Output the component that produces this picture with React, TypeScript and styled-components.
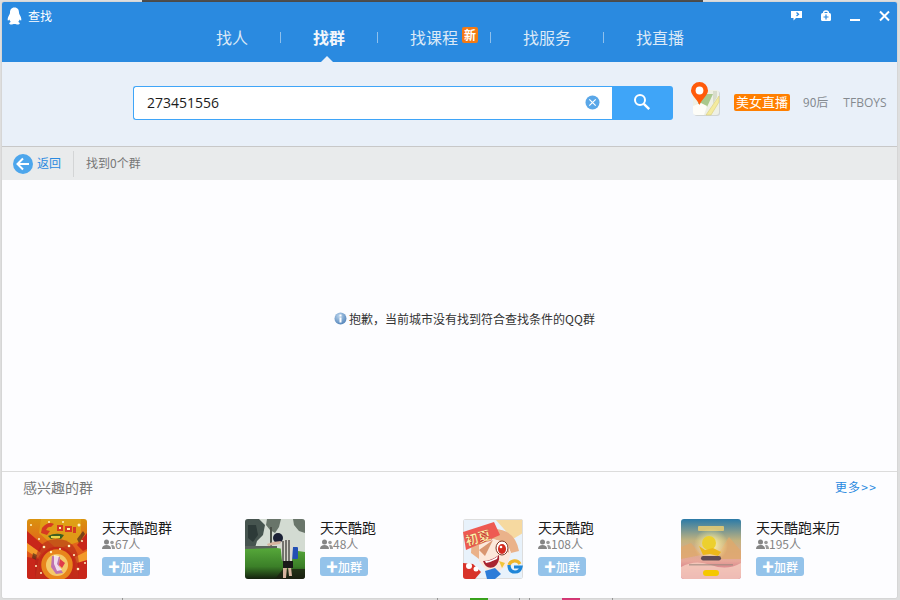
import React from "react";
import styled, { createGlobalStyle } from "styled-components";

const Global = createGlobalStyle`
  html, body { margin: 0; padding: 0; width: 900px; height: 600px; overflow: hidden; background: #d6d6d6; }
  * { box-sizing: border-box; }
  body { font-family: "Noto Sans CJK SC", "Liberation Sans", sans-serif; }
`;

const Desktop = styled.div`
  position: relative;
  width: 900px;
  height: 600px;
  padding: 2px 3px 2px 2px;
  background: #dedede;
  overflow: hidden;
`;
const TopStrip = styled.div`
  position: absolute;
  left: 142px;
  top: 0;
  width: 561px;
  height: 2px;
  background: #4d4d4d;
`;
const BottomMark = styled.div<{ $x: number; $w: number; $c: string }>`
  position: absolute;
  left: ${(p) => p.$x}px;
  bottom: 0;
  width: ${(p) => p.$w}px;
  height: 2px;
  background: ${(p) => p.$c};
`;
const Win = styled.div`
  position: relative;
  width: 895px;
  height: 596px;
  display: flex;
  flex-direction: column;
  background: #fdfdff;
  border-radius: 2px;
  box-shadow: 0 0 1px rgba(0, 0, 0, 0.35);
  overflow: hidden;
`;
const Header = styled.header`
  height: 60px;
  flex: none;
  background: #2a8ae0;
  position: relative;
`;
const TitleBar = styled.div`
  height: 25px;
  display: flex;
  align-items: center;
  padding: 3px 7px 0 5px;
`;
const TitleText = styled.span`
  margin-left: 6px;
  font-size: 12px;
  color: #fff;
  line-height: 16px;
`;
const WinButtons = styled.div`
  margin-left: auto;
  display: flex;
  align-items: center;
  gap: 19px;
  height: 16px;
`;
const Nav = styled.nav`
  display: flex;
  align-items: center;
  gap: 32px;
  padding-left: 214px;
  height: 24px;
  margin-top: -2px;
`;
const Tab = styled.a<{ $active?: boolean }>`
  position: relative;
  font-size: 16px;
  line-height: 24px;
  color: ${(p) => (p.$active ? "#f2f6fb" : "#dbe9f7")};
  font-weight: ${(p) => (p.$active ? 700 : 400)};
  white-space: nowrap;
`;
const NavSep = styled.i`
  width: 1px;
  height: 11px;
  background: #8fc0ec;
`;
const NewBadge = styled.span`
  position: absolute;
  left: 52px;
  top: 2px;
  width: 16px;
  height: 16px;
  border-radius: 2px;
  background: #f47a14;
  color: #fff;
  font-size: 12px;
  font-weight: 700;
  line-height: 15px;
  text-align: center;
`;
const Caret = styled.i`
  position: absolute;
  left: 319px;
  bottom: 0;
  width: 0;
  height: 0;
  border-left: 6px solid transparent;
  border-right: 6px solid transparent;
  border-bottom: 6px solid #e9f0f9;
`;
const SearchBar = styled.section`
  height: 84px;
  flex: none;
  background: #e9f0f9;
  display: flex;
  align-items: flex-start;
  padding: 24px 10px 0 131px;
`;
const SearchBox = styled.div`
  width: 479px;
  height: 34px;
  background: #fff;
  border: 1px solid #3fa5f8;
  border-right: 0;
  border-radius: 3px 0 0 3px;
  display: flex;
  align-items: center;
  padding: 0 12px 0 13px;
  justify-content: space-between;
`;
const SearchValue = styled.span`
  font-family: "Open Sans", sans-serif;
  font-size: 14px;
  color: #1c1c1c;
  margin-bottom: 2px;
`;
const SearchBtn = styled.button`
  width: 61px;
  height: 34px;
  padding: 0 2px 2px 0;
  border: 0;
  border-radius: 0 3px 3px 0;
  background: #3fa5f8;
  display: flex;
  align-items: center;
  justify-content: center;
`;
const MapWrap = styled.div`
  margin: -4px 0 0 17px;
  width: 31px;
  height: 38px;
  flex: none;
`;
const HotTag = styled.span`
  margin: 8px 0 0 13px;
  width: 56px;
  height: 17px;
  background: #ff7f00;
  border-radius: 2px;
  color: #fff;
  font-size: 13px;
  line-height: 15px;
  text-align: center;
  flex: none;
`;
const HotLink = styled.span`
  margin: 7px 0 0 13px;
  font-size: 12px;
  line-height: 17px;
  color: #858a90;
  flex: none;
`;
const HotLatin = styled(HotLink)`
  font-family: "Open Sans", sans-serif;
  margin-left: 15px;
  margin-top: 8px;
  font-size: 12px;
`;
const Toolbar = styled.div`
  height: 34px;
  flex: none;
  background: #e9ebec;
  border-top: 1px solid #c8c8c8;
  display: flex;
  align-items: center;
  padding-left: 11px;
`;
const BackText = styled.a`
  margin: 0 0 2px 4px;
  font-size: 12px;
  color: #2a8ae0;
`;
const ToolSep = styled.i`
  width: 1px;
  height: 26px;
  margin: 0 12px 0 12px;
  background: #d3d5d6;
`;
const ResultCount = styled.span`
  font-size: 12px;
  color: #777;
  margin-bottom: 2px;
`;
const Empty = styled.main`
  flex: 1;
  display: flex;
  align-items: center;
  justify-content: center;
  padding: 0 0 15px 30px;
`;
const EmptyText = styled.span`
  margin-left: 2px;
  font-size: 12px;
  color: #333;
  white-space: nowrap;
`;
const Footer = styled.footer`
  height: 127px;
  flex: none;
  border-top: 1px solid #dcdcdc;
  background: #fdfdff;
  padding: 0 21px;
`;
const FooterHead = styled.div`
  height: 30px;
  display: flex;
  align-items: center;
  justify-content: space-between;
`;
const FooterTitle = styled.h3`
  margin: 0;
  font-size: 14px;
  font-weight: 400;
  color: #777;
  line-height: 18px;
`;
const More = styled.a`
  font-size: 12px;
  color: #2a8ae0;
  margin: -2px -1px 0 0;
  letter-spacing: 1.2px;
`;
const Groups = styled.div`
  margin: 17px 0 0 4px;
  display: grid;
  grid-template-columns: repeat(4, 218px);
`;
const Card = styled.div`
  display: flex;
  gap: 15px;
`;
const Thumb = styled.div`
  width: 60px;
  height: 60px;
  border-radius: 3px;
  overflow: hidden;
  flex: none;
`;
const Info = styled.div`
  display: flex;
  flex-direction: column;
  align-items: flex-start;
`;
const Name = styled.div`
  font-size: 14px;
  line-height: 16px;
  color: #1a1a1a;
`;
const Members = styled.div`
  display: flex;
  align-items: center;
  font-size: 12px;
  line-height: 16px;
  color: #858585;
  height: 18px;
`;
const JoinBtn = styled.button`
  margin-top: 4px;
  width: 48px;
  height: 19px;
  padding: 0;
  border: 0;
  border-radius: 3px;
  background: #94c3ea;
  color: #fff;
  font-family: inherit;
  font-size: 12px;
  line-height: 19px;
  font-weight: 500;
  white-space: nowrap;
`;

const Penguin = () => (
  <svg width="15" height="18" viewBox="0 0 15 18">
    <path fill="#fff" d="M7.5 0.5C4.2 0.5 3 3 3 5.6c0 1-.3 1.500-.8 2.500C1.200 9.900.5 11.500.7 13c.2 1 .9.700 1.600-.4.300 1 .8 1.800 1.500 2.500-1.100.4-1.700 1-1.500 1.600.3.800 2.300.8 3.500.5.500-.1 1-.2 1.700-.2s1.200.1 1.700.2c1.200.3 3.200.3 3.500-.5.200-.6-.4-1.200-1.500-1.600.7-.7 1.200-1.500 1.500-2.500.7 1.100 1.400 1.400 1.600.4.200-1.500-.5-3.100-1.500-4.900-.5-1-.8-1.500-.8-2.500C12 3 10.800.5 7.500.5z" />
  </svg>
);
const FeedbackIcon = () => (
  <svg width="11" height="12" viewBox="0 0 11 12">
    <path fill="#fff" d="M0 1h11v7H5l-2.500 2.500V8H0z" />
    <path fill="none" stroke="#2a8ae0" strokeWidth="1.300" d="M5.500 2.500l2 1.700-2 1.700" />
  </svg>
);
const LockPlusIcon = () => (
  <svg width="10" height="12" viewBox="0 0 10 12">
    <path fill="none" stroke="#fff" strokeWidth="1.300" d="M2.500 5V3.500a2.500 2.500 0 0 1 5 0V5" />
    <rect x="0" y="3" width="10" height="8" rx="1.500" fill="#fff" />
    <path stroke="#2a8ae0" strokeWidth="1.200" d="M2.500 7h5M5 4.500v5" />
  </svg>
);
const MinIcon = () => (
  <svg width="10" height="12" viewBox="0 0 10 12">
    <rect x="0" y="9" width="10" height="2" fill="#fff" />
  </svg>
);
const CloseIcon = () => (
  <svg width="11" height="12" viewBox="0 0 11 12">
    <path stroke="#fff" strokeWidth="2" d="M1 1.500l9 9M10 1.500l-9 9" />
  </svg>
);
const ClearIcon = () => (
  <svg width="15" height="15" viewBox="0 0 15 15" style={{ marginBottom: 2 }}>
    <circle cx="7.500" cy="7.500" r="7" fill="#5aa7e8" />
    <path stroke="#fff" strokeWidth="1.200" d="M4.300 4.300l6.400 6.400M10.700 4.300l-6.400 6.400" />
  </svg>
);
const SearchIcon = () => (
  <svg width="18" height="18" viewBox="0 0 18 18">
    <circle cx="7" cy="7" r="5" fill="none" stroke="#fff" strokeWidth="2" />
    <path stroke="#fff" strokeWidth="2.400" d="M10.800 10.800l5.400 5.400" />
  </svg>
);
const MapIcon = () => (
  <svg width="31" height="38" viewBox="0 0 31 38">
    <rect x="4" y="9" width="26" height="25" rx="3" fill="#b9b9b0" opacity="0.5" />
    <rect x="3" y="8" width="26" height="25" rx="3" fill="#eef0e6" />
    <path fill="#a9c88c" d="M8 12h15l-6 13H8z" />
    <path fill="#d8dccb" d="M23 9h4v6l-4 7z" />
    <path fill="#f4eb9e" stroke="#d9cd7c" strokeWidth=".6" d="M29 14v6l-8 13h-5z" />
    <path fill="#fdfdf8" d="M3 24l8-3 6 3-3 9H6a3 3 0 0 1-3-3z" />
    <path fill="#ff5a0a" d="M9.500 0a8.500 8.500 0 0 0-8.500 8.500c0 4.500 6 8.500 8.500 14.500 2.500-6 8.500-10 8.500-14.500A8.500 8.500 0 0 0 9.500 0z" />
    <circle cx="9.500" cy="8.500" r="3.900" fill="#fff" />
  </svg>
);
const BackIcon = () => (
  <svg width="20" height="20" viewBox="0 0 20 20">
    <circle cx="10" cy="10" r="10" fill="#4da6ec" />
    <path fill="none" stroke="#fff" strokeWidth="2" d="M16 10H5M10 4.500L4.500 10l5.500 5.500" />
  </svg>
);
const InfoIcon = () => (
  <svg width="13" height="13" viewBox="0 0 13 13">
    <defs>
      <radialGradient id="ig" cx="40%" cy="30%" r="75%">
        <stop offset="0" stopColor="#bcd6ee" />
        <stop offset="1" stopColor="#4f81b8" />
      </radialGradient>
    </defs>
    <circle cx="6.500" cy="6.500" r="6" fill="url(#ig)" />
    <rect x="5.500" y="2.500" width="2" height="2" fill="#fff" />
    <rect x="5.500" y="5.500" width="2" height="5" fill="#fff" />
  </svg>
);
const PeopleIcon = () => (
  <svg width="13" height="10" viewBox="0 0 13 10">
    <circle cx="4.500" cy="3" r="2.500" fill="#858585" />
    <path fill="#858585" d="M0 10c0-3 2-4 4.500-4S9 7 9 10z" />
    <circle cx="10" cy="3.500" r="1.800" fill="#9a9a9a" />
    <path fill="#9a9a9a" d="M10 6c2 0 3 1.500 3 4h-3c0-1.500-.3-2.800-1-3.600z" />
  </svg>
);

const ThumbRun = () => (
  <svg width="60" height="60" viewBox="0 0 60 60">
    <defs>
      <linearGradient id="t1" x1="0" y1="0" x2="0" y2="1">
        <stop offset="0" stopColor="#d9930f" />
        <stop offset=".4" stopColor="#e2661a" />
        <stop offset="1" stopColor="#d8351c" />
      </linearGradient>
    </defs>
    <rect width="60" height="60" fill="url(#t1)" />
    <path fill="#e0a418" d="M14 0h40v22L30 30 12 14z" opacity=".8" />
    <path fill="#c8261a" d="M0 12l16 14-4 8L0 24zM60 14l-10 12 6 6 4-2zM0 38l12 2-4 20H0zM60 36l-10 4 2 20h8z" />
    <path fill="#f39a2a" d="M0 24l14 10-3 5L0 32zM60 32l-12 6 2 6 10-3z" />
    <path fill="#4f2c1a" d="M50 20l6-8 2 3-6 9zM6 34l4 2-1 5-4-2z" opacity=".7" />
    <path fill="#d63a22" d="M15 9q6-7 12-4l-3 3q-3-1-5 3l4 1-3 4-6-2zM30 6h6v6h-6zM38 7h7v6h-7zM46 8h3v6h-3z" />
    <path fill="#fff2b0" d="M32 8h2v2h-2zM40 9h3v2h-3z" />
    <path fill="#3d5f22" d="M21 17q8-4 16-1l-3 4q-6-2-10 0z" />
    <path fill="#e8d64a" d="M24 17h9v2h-9z" />
    <path fill="#b0201a" d="M8 44q2-24 22-24t22 24v16H8z" opacity=".55" />
    <circle cx="30" cy="46" r="17" fill="#e8851c" stroke="#c42a18" strokeWidth="2.500" />
    <circle cx="30" cy="46" r="11" fill="#f4c96a" />
    <path fill="#b05cc0" d="M25 37l8 1-1 9 4 7-7 1-5-7z" opacity=".8" />
    <path fill="#fff" d="M27 36l5 1-2 8 5 6-5 1-3-7z" opacity=".75" />
    <path fill="#e03b4a" d="M33 40l5 4-3 5-3-3z" />
    <g fill="#fff3c0">
      <circle cx="4" cy="6" r="1" /><circle cx="52" cy="6" r="1.500" /><circle cx="17" cy="28" r="1.300" />
      <circle cx="42" cy="27" r="1.300" /><circle cx="55" cy="22" r="1" /><circle cx="9" cy="47" r="1" />
      <circle cx="51" cy="50" r="1.300" /><circle cx="36" cy="3" r="1" /><circle cx="24" cy="33" r="1.200" />
      <circle cx="12" cy="20" r="1" /><circle cx="47" cy="36" r="1.100" /><circle cx="33" cy="30" r="1" />
      <circle cx="14" cy="54" r="1" /><circle cx="22" cy="3" r="1" /><circle cx="58" cy="44" r="1" />
    </g>
  </svg>
);
const ThumbPhoto = () => (
  <svg width="60" height="60" viewBox="0 0 60 60">
    <defs>
      <linearGradient id="t2" x1="0" y1="0" x2="0" y2="1">
        <stop offset="0" stopColor="#56a83a" />
        <stop offset=".6" stopColor="#3b7f28" />
        <stop offset="1" stopColor="#14200e" />
      </linearGradient>
    </defs>
    <rect width="60" height="60" fill="#d3dbd2" />
    <path fill="#46544f" d="M0 0h14l6 6-2 10-6 6-2 7H0z" />
    <path fill="#2d3a38" d="M3 6h8l2 10-5 7-5-4z" />
    <path fill="#69756a" d="M22 0h14l-2 8-4 6-5-3-4-5zM48 0h12v14l-6-2-5-6z" />
    <rect x="25" y="8" width="2" height="22" fill="#4a5048" />
    <rect x="0" y="27" width="32" height="3" fill="#59625c" />
    <path fill="url(#t2)" d="M0 30l32-1 28 4v27H0z" />
    <path fill="#1c1f12" d="M38 50h22v10H30z" opacity=".75" />
    <rect x="47" y="28" width="6" height="12" rx="1" fill="#2350b4" />
    <path fill="#d9d9d0" d="M35 22l9-2 4 8-1 14H37z" />
    <path stroke="#3b3b38" strokeWidth="1.300" d="M38 22v20M41 21v21M44 21v21" />
    <circle cx="33" cy="19" r="5" fill="#1b2035" />
    <path fill="#d6b49e" d="M36 22l-8 1-6 2 1 2 12-2zM38 48h4l-1 11h-3zM43 48h3l1 9h-3z" />
    <rect x="38" y="42" width="10" height="7" fill="#191919" />
  </svg>
);
const ThumbAnime = () => (
  <svg width="60" height="60" viewBox="0 0 60 60">
    <rect width="60" height="60" fill="#e8f2fb" />
    <path fill="#f6d9a0" d="M32 0h28v14l-10 6z" />
    <rect x=".5" y=".5" width="59" height="59" fill="none" stroke="#ddd" />
    <path fill="#eab28a" d="M8 34q0-22 22-24 22 0 26 22l-8 2-4-10-14-4-10 6-4 14z" />
    <path fill="#fce8da" d="M16 26l14-6 14 4 4 10-4 12-10 8-10-2-8-10z" />
    <path fill="#d99670" d="M30 21l-8 16-6-6zM44 24l-8-2 10 12z" />
    <ellipse cx="39" cy="29" rx="6" ry="7" fill="#fff" stroke="#7f3522" />
    <ellipse cx="39" cy="30" rx="4" ry="5" fill="#d42c1f" />
    <circle cx="38" cy="28" r="1.300" fill="#fff" />
    <path fill="#a82430" d="M20 42q8 0 16-6 1 8-5 12-8 3-11-6z" />
    <path fill="#fff" d="M22 42q7 0 13-5l-1 3q-6 3-11 4z" />
    <path fill="#ee5a52" d="M0 13L31 3l6 13L3 31z" />
    <text x="4" y="27" fontSize="13" fontWeight="900" fill="#fff3a8" stroke="#c3302c" strokeWidth=".4" transform="rotate(-16 4 27)" fontFamily="Noto Sans CJK SC">初夏</text>
    <path fill="#d8332a" d="M0 44l10 1 8 8-6 7H0z" />
    <circle cx="6" cy="47" r="3" fill="#fff" />
    <circle cx="13" cy="50" r="2.500" fill="#fff" />
    <path fill="#2d7cd8" d="M22 52l10-3 6 6-6 5H24z" />
    <path fill="#f0c53a" d="M36 42l6 2-3 5z" />
    <path fill="none" stroke="#f0b52a" strokeWidth="3.200" d="M46 46a6 6 0 0 1 11-1" />
    <path fill="none" stroke="#1f86d8" strokeWidth="3.200" d="M46 46q0 7 6 7 5 0 6-5h-7" />
  </svg>
);
const ThumbGame = () => (
  <svg width="60" height="60" viewBox="0 0 60 60">
    <defs>
      <linearGradient id="t4" x1="0" y1="0" x2="0" y2="1">
        <stop offset="0" stopColor="#2a7aa8" />
        <stop offset=".36" stopColor="#c2b27e" />
        <stop offset=".7" stopColor="#e8a79a" />
        <stop offset="1" stopColor="#c4567a" />
      </linearGradient>
      <radialGradient id="t4g" cx=".5" cy=".5" r=".5">
        <stop offset="0" stopColor="#fff8b0" />
        <stop offset="1" stopColor="#fff49a" stopOpacity="0" />
      </radialGradient>
    </defs>
    <rect width="60" height="60" fill="url(#t4)" />
    <path fill="#dfa96c" d="M38 34l10-16 12 14v8H38zM0 28l10-4 10 12-20 4z" opacity=".8" />
    <path fill="#f6cdbe" d="M0 48q14-8 30-2t30-2v16H0z" opacity=".85" />
    <rect x="17" y="7" width="26" height="5" rx="1" fill="#d7c478" />
    <circle cx="30" cy="26" r="17" fill="url(#t4g)" />
    <circle cx="28" cy="24" r="7" fill="#ecd02e" />
    <path fill="#ecb81a" d="M18 27l6 4 8-2 8 4-3 4-8-2-7 1z" />
    <rect x="20" y="37" width="20" height="4.500" rx="2.200" fill="#5e4a54" />
    <rect x="8" y="45" width="44" height="1.500" fill="#a08a80" opacity=".7" />
    <rect x="22" y="51" width="16" height="6" rx="3" fill="#f5c800" />
  </svg>
);

const groups = [
  { name: "天天酷跑群", count: "67人", Pic: ThumbRun },
  { name: "天天酷跑", count: "48人", Pic: ThumbPhoto },
  { name: "天天酷跑", count: "108人", Pic: ThumbAnime },
  { name: "天天酷跑来历", count: "195人", Pic: ThumbGame },
];

export default function App() {
  return (
    <Desktop>
      <Global />
      <TopStrip />
      <BottomMark $x={122} $w={1} $c="#999" />
      <BottomMark $x={437} $w={1} $c="#999" />
      <BottomMark $x={470} $w={18} $c="#3aa51e" />
      <BottomMark $x={519} $w={1} $c="#999" />
      <BottomMark $x={529} $w={1} $c="#999" />
      <BottomMark $x={562} $w={18} $c="#d83a78" />
      <BottomMark $x={612} $w={1} $c="#999" />
      <Win>
        <Header>
          <TitleBar>
            <Penguin />
            <TitleText>查找</TitleText>
            <WinButtons>
              <FeedbackIcon />
              <LockPlusIcon />
              <MinIcon />
              <CloseIcon />
            </WinButtons>
          </TitleBar>
          <Nav>
            <Tab>找人</Tab>
            <NavSep />
            <Tab $active>找群</Tab>
            <NavSep />
            <Tab>
              找课程<NewBadge>新</NewBadge>
            </Tab>
            <NavSep />
            <Tab>找服务</Tab>
            <NavSep />
            <Tab>找直播</Tab>
          </Nav>
          <Caret />
        </Header>
        <SearchBar>
          <SearchBox>
            <SearchValue>273451556</SearchValue>
            <ClearIcon />
          </SearchBox>
          <SearchBtn aria-label="搜索">
            <SearchIcon />
          </SearchBtn>
          <MapWrap>
            <MapIcon />
          </MapWrap>
          <HotTag>美女直播</HotTag>
          <HotLink>90后</HotLink>
          <HotLatin>TFBOYS</HotLatin>
        </SearchBar>
        <Toolbar>
          <BackIcon />
          <BackText>返回</BackText>
          <ToolSep />
          <ResultCount>找到0个群</ResultCount>
        </Toolbar>
        <Empty>
          <InfoIcon />
          <EmptyText>抱歉，当前城市没有找到符合查找条件的QQ群</EmptyText>
        </Empty>
        <Footer>
          <FooterHead>
            <FooterTitle>感兴趣的群</FooterTitle>
            <More>更多&gt;&gt;</More>
          </FooterHead>
          <Groups>
            {groups.map(({ name, count, Pic }) => (
              <Card key={name + count}>
                <Thumb>
                  <Pic />
                </Thumb>
                <Info>
                  <Name>{name}</Name>
                  <Members>
                    <PeopleIcon />
                    {count}
                  </Members>
                  <JoinBtn>✚加群</JoinBtn>
                </Info>
              </Card>
            ))}
          </Groups>
        </Footer>
      </Win>
    </Desktop>
  );
}
